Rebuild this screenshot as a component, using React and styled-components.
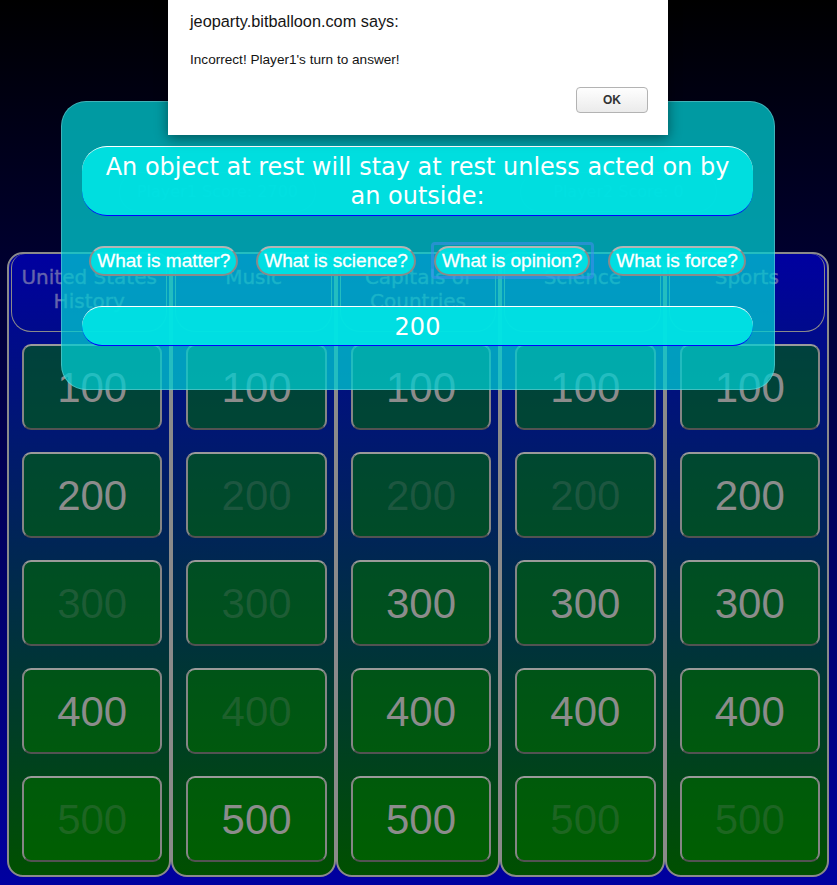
import React from "react";
import styled, { createGlobalStyle, css } from "styled-components";

const Global = createGlobalStyle`
  html, body { margin: 0; padding: 0; }
  body { background: #000; font-family: "DejaVu Sans", Verdana, sans-serif; }
  * { box-sizing: border-box; }
`;

const Page = styled.div`
  position: relative;
  width: 837px;
  height: 885px;
  overflow: hidden;
  background: linear-gradient(to bottom, #000000 0%, #0000a0 100%);
`;

const ScoreBar = styled.div`
  display: flex;
  align-items: flex-start;
  height: 252px;
  padding: 172px 0 0 119px;
  gap: 204px;
`;

const Score = styled.div`
  width: 197px;
  height: 40px;
  border: 1px solid rgba(255, 255, 255, 0.22);
  border-radius: 20px;
  color: rgba(255, 255, 255, 0.3);
  font-size: 16px;
  line-height: 38px;
  text-align: center;
`;

const Board = styled.div`
  display: grid;
  grid-template-columns: repeat(5, 1fr);
  width: 822px;
  height: 625px;
  margin-left: 7px;
`;

const Column = styled.div`
  display: flex;
  flex-direction: column;
  min-width: 0;
  border: 2px solid #8a8a8a;
  border-radius: 16px;
  background: linear-gradient(to bottom, #0000a0, #005000);
`;

const Category = styled.div`
  height: 78px;
  margin: 0 2px;
  padding: 11px 3px 0;
  border: 1px solid #8a8a8a;
  border-top: none;
  border-radius: 14px 14px 20px 20px;
  color: #6464ac;
  font-size: 20px;
  line-height: 24px;
  text-align: center;
  -webkit-text-stroke: 0.4px #6464ac;
`;

const Cards = styled.div`
  display: flex;
  flex-direction: column;
  gap: 22px;
  padding: 12px 7px 0 13px;
`;

const Card = styled.div`
  display: flex;
  align-items: center;
  justify-content: center;
  height: 86px;
  padding-top: 2px;
  border: 2px solid #888;
  border-color: #9a9a9a #858585 #525252 #858585;
  border-radius: 9px;
  background: rgba(0, 110, 0, 0.55);
  font-family: "Liberation Sans", Arial, sans-serif;
  font-size: 42px;
  color: ${(p) => (p.$used ? "rgba(136, 136, 136, 0.22)" : "#8c8c8c")};
`;

const Modal = styled.div`
  position: absolute;
  left: 61px;
  top: 101px;
  width: 714px;
  display: flex;
  flex-direction: column;
  padding: 44px 21px 43px 20px;
  border: 1px solid rgba(255, 255, 255, 0.25);
  border-radius: 25px;
  background: rgba(0, 206, 209, 0.75);
`;

const Pill = styled.div`
  border-top: 1px solid #ffffff;
  border-bottom: 1px solid #0000ff;
  background: rgba(0, 229, 229, 0.9);
  color: #fff;
  text-align: center;
  font-size: 24px;
`;

const Question = styled(Pill)`
  padding: 6px 10px 4px;
  border-radius: 25px;
  line-height: 29px;
`;

const Value = styled(Pill)`
  margin-top: 30px;
  padding: 6px 12px 4px;
  border-radius: 20px;
  line-height: 28px;
`;

const Answers = styled.div`
  display: flex;
  justify-content: center;
  gap: 18px;
  margin-top: 30px;
`;

const Answer = styled.button`
  position: relative;
  height: 30px;
  padding: 0 6px;
  border: 2px solid #8a8a8a;
  border-top-color: #b4b4b4;
  border-radius: 15px;
  background: rgba(0, 229, 229, 0.9);
  color: #fff;
  font-family: "Liberation Sans", Arial, sans-serif;
  font-size: 19px;
  line-height: 26px;
  white-space: nowrap;
  -webkit-text-stroke: 0.3px #fff;
  ${(p) =>
    p.$focused &&
    css`
      &::after {
        content: "";
        position: absolute;
        inset: -6px -6px -5px -5px;
        border: 3px solid rgba(70, 140, 240, 0.55);
        border-radius: 4px;
      }
    `}
`;

const Dialog = styled.div`
  position: absolute;
  left: 168px;
  top: 0;
  width: 500px;
  height: 135px;
  display: flex;
  flex-direction: column;
  padding: 11px 20px 0 22px;
  background: #fff;
  box-shadow: 0 3px 12px rgba(0, 0, 0, 0.45);
  font-family: "Liberation Sans", Arial, sans-serif;
  color: #141414;
`;

const DialogTitle = styled.div`
  font-size: 16.3px;
  line-height: 20px;
`;

const DialogMessage = styled.div`
  margin-top: 20px;
  font-size: 13.6px;
  line-height: 18px;
`;

const DialogActions = styled.div`
  display: flex;
  justify-content: flex-end;
  margin-top: 18px;
`;

const OkButton = styled.button`
  width: 72px;
  height: 26px;
  border: 1px solid #b3b3b3;
  border-radius: 4px;
  background: linear-gradient(#fefefe, #ebebeb);
  color: #333;
  font-family: "Liberation Sans", Arial, sans-serif;
  font-weight: bold;
  font-size: 12px;
`;

const categories = [
  { name: "United States History", used: [false, false, true, false, true] },
  { name: "Music", used: [false, true, true, true, false] },
  { name: "Capitals of Countries", used: [false, true, false, false, false] },
  { name: "Science", used: [false, true, false, false, true] },
  { name: "Sports", used: [false, false, false, false, true] },
];

const values = [100, 200, 300, 400, 500];

const answers = ["What is matter?", "What is science?", "What is opinion?", "What is force?"];

export default function App() {
  return (
    <Page>
      <Global />
      <ScoreBar>
        <Score>Player1 Score: 2700</Score>
        <Score>Player2 Score: 0</Score>
      </ScoreBar>
      <Board>
        {categories.map((c) => (
          <Column key={c.name}>
            <Category>{c.name}</Category>
            <Cards>
              {values.map((v, i) => (
                <Card key={v} $used={c.used[i]}>
                  {v}
                </Card>
              ))}
            </Cards>
          </Column>
        ))}
      </Board>
      <Modal>
        <Question>An object at rest will stay at rest unless acted on by an outside:</Question>
        <Answers>
          {answers.map((a) => (
            <Answer key={a} $focused={a === "What is opinion?"}>
              {a}
            </Answer>
          ))}
        </Answers>
        <Value>200</Value>
      </Modal>
      <Dialog>
        <DialogTitle>jeoparty.bitballoon.com says:</DialogTitle>
        <DialogMessage>Incorrect! Player1's turn to answer!</DialogMessage>
        <DialogActions>
          <OkButton>OK</OkButton>
        </DialogActions>
      </Dialog>
    </Page>
  );
}
